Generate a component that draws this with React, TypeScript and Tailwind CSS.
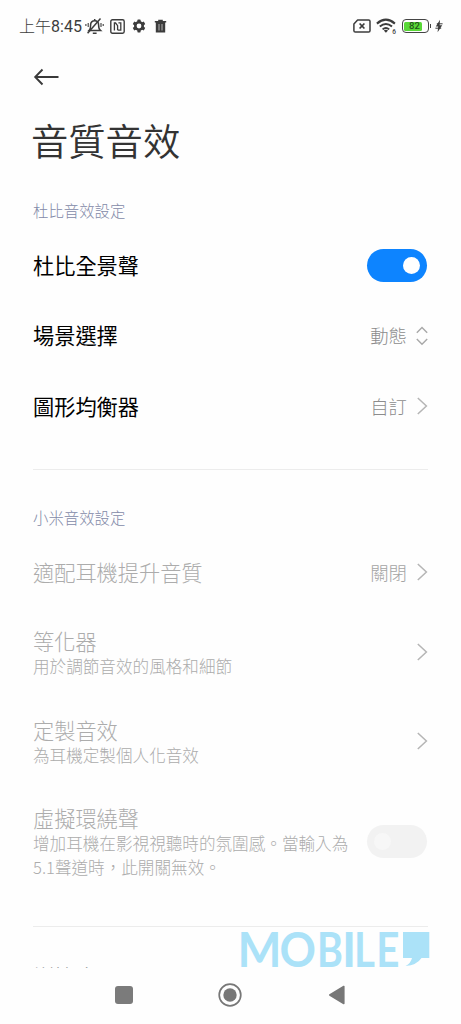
import { useState } from "react";
import type { ReactNode } from "react";

type RowProps = {
  title: string;
  summary?: string;
  disabled?: boolean;
  className?: string;
  children?: ReactNode;
};

function Row({ title, summary, disabled, className, children }: RowProps) {
  return (
    <div
      className={`flex items-center justify-between ${className ?? "h-[70.5px]"} ${
        disabled ? "text-[#acacac]" : "text-black"
      }`}
    >
      <div className={`w-[325px] shrink-0 ${summary ? "" : "-mt-px"}`}>
        <div
          className={`text-[21.2px] leading-[28px] ${disabled ? "font-light" : "font-normal"}`}
        >
          {title}
        </div>
        {summary && (
          <div className="-mt-px text-[16.6px] leading-[24px] font-light">{summary}</div>
        )}
      </div>
      {children}
    </div>
  );
}

function Value({ text, disabled }: { text: string; disabled?: boolean }) {
  return (
    <span
      className={`-mt-px -ml-10 mr-[9px] flex-1 text-right text-[18.4px] leading-6 font-light ${
        disabled ? "text-[#a4a4a4]" : "text-[#8c8c8c]"
      }`}
    >
      {text}
    </span>
  );
}

function Chevron() {
  return (
    <svg width="12" height="20" viewBox="0 0 12 20" fill="none" className="-mt-px shrink-0">
      <path d="M1.8 2L10.4 10L1.8 18" stroke="#b5b5b5" strokeWidth="1.5" />
    </svg>
  );
}

function UpDown() {
  return (
    <svg width="12" height="20" viewBox="0 0 12 20" fill="none" className="shrink-0">
      <path
        d="M0.8 6.8L6 1.6L11.2 6.8M0.8 13L6 18.2L11.2 13"
        stroke="#a8a8a8"
        strokeWidth="1.4"
      />
    </svg>
  );
}

function StatusBar() {
  return (
    <header className="flex h-[52px] items-center pl-[19px] pr-[18px] text-[#3c3c3c]">
      <span className="mt-[2px] w-[65.5px] whitespace-nowrap font-['Roboto','Noto_Sans_CJK_TC',sans-serif] text-[16px] leading-5 font-light">
        上午<span className="font-normal">8:45</span>
      </span>
      {/* muted bell */}
      <svg width="19" height="18" viewBox="0 0 19 18" fill="none" stroke="currentColor" strokeWidth="1.5">
        <path d="M4.2 13.4C5.8 12 5.6 10 5.6 8C5.6 5.2 7.2 3.8 9.7 3.8C12.1 3.8 13.6 5.4 13.6 8C13.6 10.2 13.6 12 15.4 13.4Z" />
        <path d="M7.8 16.2H11.6M9.7 2V4" />
        <path d="M15.5 1.5L2.6 16.2" />
        <path d="M3.2 6V10M0.9 7V9M16 6V10M18.2 7V9" strokeWidth="1.1" />
      </svg>
      {/* nfc */}
      <svg width="15" height="15" viewBox="0 0 15 15" fill="none" stroke="currentColor" className="ml-[6.5px]">
        <rect x="0.8" y="0.8" width="13.4" height="13.4" rx="1.6" strokeWidth="1.4" />
        <path d="M4.4 11.4V4H5.6L7.6 6.6V10.6L8.4 11.2H10.8V3.8H8.4" strokeWidth="1.3" />
      </svg>
      {/* gear */}
      <svg width="14" height="14" viewBox="0 0 14 14" className="ml-[7px]">
        <g fill="currentColor">
          <circle cx="7" cy="7" r="5" />
          <rect x="5.4" y="0.6" width="3.2" height="12.8" rx="0.6" />
          <rect x="5.4" y="0.6" width="3.2" height="12.8" rx="0.6" transform="rotate(60 7 7)" />
          <rect x="5.4" y="0.6" width="3.2" height="12.8" rx="0.6" transform="rotate(120 7 7)" />
        </g>
        <circle cx="7" cy="7" r="2.4" fill="white" />
      </svg>
      {/* trash */}
      <svg width="13" height="14" viewBox="0 0 13 14" className="ml-[8px]">
        <path d="M0.8 2H4.2V0.7H8.8V2H12.2V3.6H11.2V13.4H1.8V3.6H0.8Z" fill="currentColor" />
        <path d="M5 5V11.5M8 5V11.5" stroke="#b5b5b5" strokeWidth="1" />
      </svg>

      <div className="ml-auto flex items-center">
        {/* no sim */}
        <svg width="18" height="14" viewBox="0 0 18 14" fill="none" stroke="currentColor">
          <path d="M4.6 0.9H15.6Q17 0.9 17 2.3V11.7Q17 13 15.6 13H2.3Q0.9 13 0.9 11.7V5Z" strokeWidth="1.5" strokeLinejoin="round" />
          <path d="M6.6 4.5L11.4 9.5M11.4 4.5L6.6 9.5" strokeWidth="1.7" />
        </svg>
        {/* wifi 6 */}
        <svg width="22" height="17" viewBox="0 0 22 17" fill="none" stroke="currentColor" className="ml-[5px]">
          <path d="M0.9 5.6Q9.9 -2.2 18.9 5.6" strokeWidth="2.1" />
          <path d="M3.8 8.6Q9.9 3.4 16 8.6" strokeWidth="2" />
          <path d="M6.6 11.4Q9.9 8.6 13.2 11.4" strokeWidth="1.9" />
          <path d="M7.8 12.4Q9.9 11 12 12.4L9.9 14.8Z" fill="currentColor" stroke="none" />
          <text x="16.2" y="15.8" fontSize="6.5" fontWeight="500" fontFamily="Roboto" fill="currentColor" stroke="none">
            6
          </text>
        </svg>
        {/* battery */}
        <div className="ml-[4px] flex h-[14px] w-[27px] items-center rounded-[4px] border-[1.5px] border-[#444444] p-[1.5px]">
          <div className="flex h-full w-[18px] items-center justify-center rounded-[1.5px] bg-[#59d837] pl-[3px] font-['Roboto',sans-serif] text-[9.5px] leading-none font-medium text-[#24531c]">
            82
          </div>
        </div>
        <div className="ml-px h-[4px] w-[1.5px] bg-[#444444]" />
        <svg width="8" height="14" viewBox="0 0 8 14" className="ml-[4px]">
          <path d="M5 0.8L0.8 7.4H3.2L2.6 13.2L7.2 6.2H4.6Z" fill="currentColor" />
          <path d="M1.8 4.8H7.6M0.4 9.2H6.2" stroke="currentColor" strokeWidth="1" />
        </svg>
      </div>
    </header>
  );
}

function NavBar() {
  return (
    <nav className="flex h-14 items-center pb-[2px]">
      <div className="ml-[115px] size-[17.5px] rounded-[3px] bg-[#7b7b7b]" />
      <svg width="24" height="24" viewBox="0 0 24 24" className="ml-[85.5px]">
        <circle cx="12" cy="12" r="10.8" fill="none" stroke="#777777" strokeWidth="1.7" />
        <circle cx="12" cy="12" r="6.7" fill="#777777" />
      </svg>
      <svg width="18" height="20" viewBox="0 0 18 20" className="ml-[86px]">
        <path d="M1.8 10L15.8 1.5V18.5Z" fill="#777777" stroke="#777777" strokeWidth="1.6" strokeLinejoin="round" />
      </svg>
    </nav>
  );
}

const logoLetters = [
  { char: "M", x: -1.6, scale: 0.97 },
  { char: "O", x: 40.4, scale: 0.94 },
  { char: "B", x: 77.9, scale: 0.82 },
  { char: "I", x: 103, scale: 1 },
  { char: "L", x: 115, scale: 0.84 },
  { char: "E", x: 137.2, scale: 0.84 },
];

export default function App() {
  const [dolby, setDolby] = useState(true);

  return (
    <div
      lang="zh-Hant"
      className="relative flex h-[1024px] w-[461px] flex-col overflow-hidden bg-[#fefefe] font-['Noto_Sans_CJK_TC',sans-serif]"
    >
      <StatusBar />

      <main className="h-[916px] overflow-hidden px-[33px]">
        <svg width="27" height="18" viewBox="0 0 27 18" fill="none" className="mt-[16px]">
          <path d="M9.5 1.5L2.2 9L9.5 16.5M2.2 9H25.5" stroke="#3a3a3a" strokeWidth="1.9" />
        </svg>
        <h1 className="mt-[28px] -ml-[2px] text-[37.3px] leading-[52px] font-[350] text-[#333333]">
          音質音效
        </h1>

        {/* Dolby */}
        <h2 className="mt-[33px] h-[31px] text-[15.4px] leading-[22px] font-light text-[#838aa8]">
          杜比音效設定
        </h2>
        <Row title="杜比全景聲">
          <button
            onClick={() => setDolby(!dolby)}
            className={`-ml-10 mr-px flex h-[33px] w-[60px] shrink-0 items-center rounded-full px-[7px] ${
              dolby ? "justify-end bg-[#0d84ff]" : "justify-start bg-[#f0f0f0]"
            }`}
          >
            <span className="size-[17px] rounded-full bg-white" />
          </button>
        </Row>
        <Row title="場景選擇">
          <Value text="動態" />
          <UpDown />
        </Row>
        <Row title="圖形均衡器">
          <Value text="自訂" />
          <Chevron />
        </Row>
        <hr className="mt-[27px] border-[#ececec]" />

        {/* Mi sound */}
        <h2 className="mt-[36px] h-[32px] text-[15.4px] leading-[22px] font-light text-[#838aa8]">
          小米音效設定
        </h2>
        <Row title="適配耳機提升音質" disabled>
          <Value text="關閉" disabled />
          <Chevron />
        </Row>
        <Row title="等化器" summary="用於調節音效的風格和細節" disabled className="h-[89px]">
          <Chevron />
        </Row>
        <Row title="定製音效" summary="為耳機定製個人化音效" disabled className="h-[89px]">
          <Chevron />
        </Row>
        <Row
          title="虛擬環繞聲"
          summary="增加耳機在影視視聽時的氛圍感。當輸入為5.1聲道時，此開關無效。"
          disabled
          className="h-[111px]"
        >
          <div className="-ml-10 mr-px flex h-[33px] w-[60px] shrink-0 items-center rounded-full bg-[#f2f2f2] px-[7px]">
            <span className="size-[17px] rounded-full bg-[#f7f7f7]" />
          </div>
        </Row>
        <hr className="mt-[29px] border-[#ececec]" />
        <h2 className="mt-[36px] text-[15.4px] leading-[22px] text-[#8a8a8a]">
          線控設定
        </h2>
      </main>

      <NavBar />

      {/* watermark */}
      <svg
        width="192"
        height="42"
        viewBox="0 0 192 42"
        className="absolute top-[928px] left-[239px] overflow-visible"
      >
        <g fontFamily="Lato" fontWeight="700" fontSize="48" fill="#abe2f8">
          {logoLetters.map((l) => (
            <text key={l.char} transform={`translate(${l.x} 38.6) scale(${l.scale} 1)`}>
              {l.char}
            </text>
          ))}
        </g>
        <path d="M164 4H190.3V30H182.5Q178 37 166.5 38Q172 35 173 30H164Z" fill="#abe2f8" />
      </svg>
    </div>
  );
}
